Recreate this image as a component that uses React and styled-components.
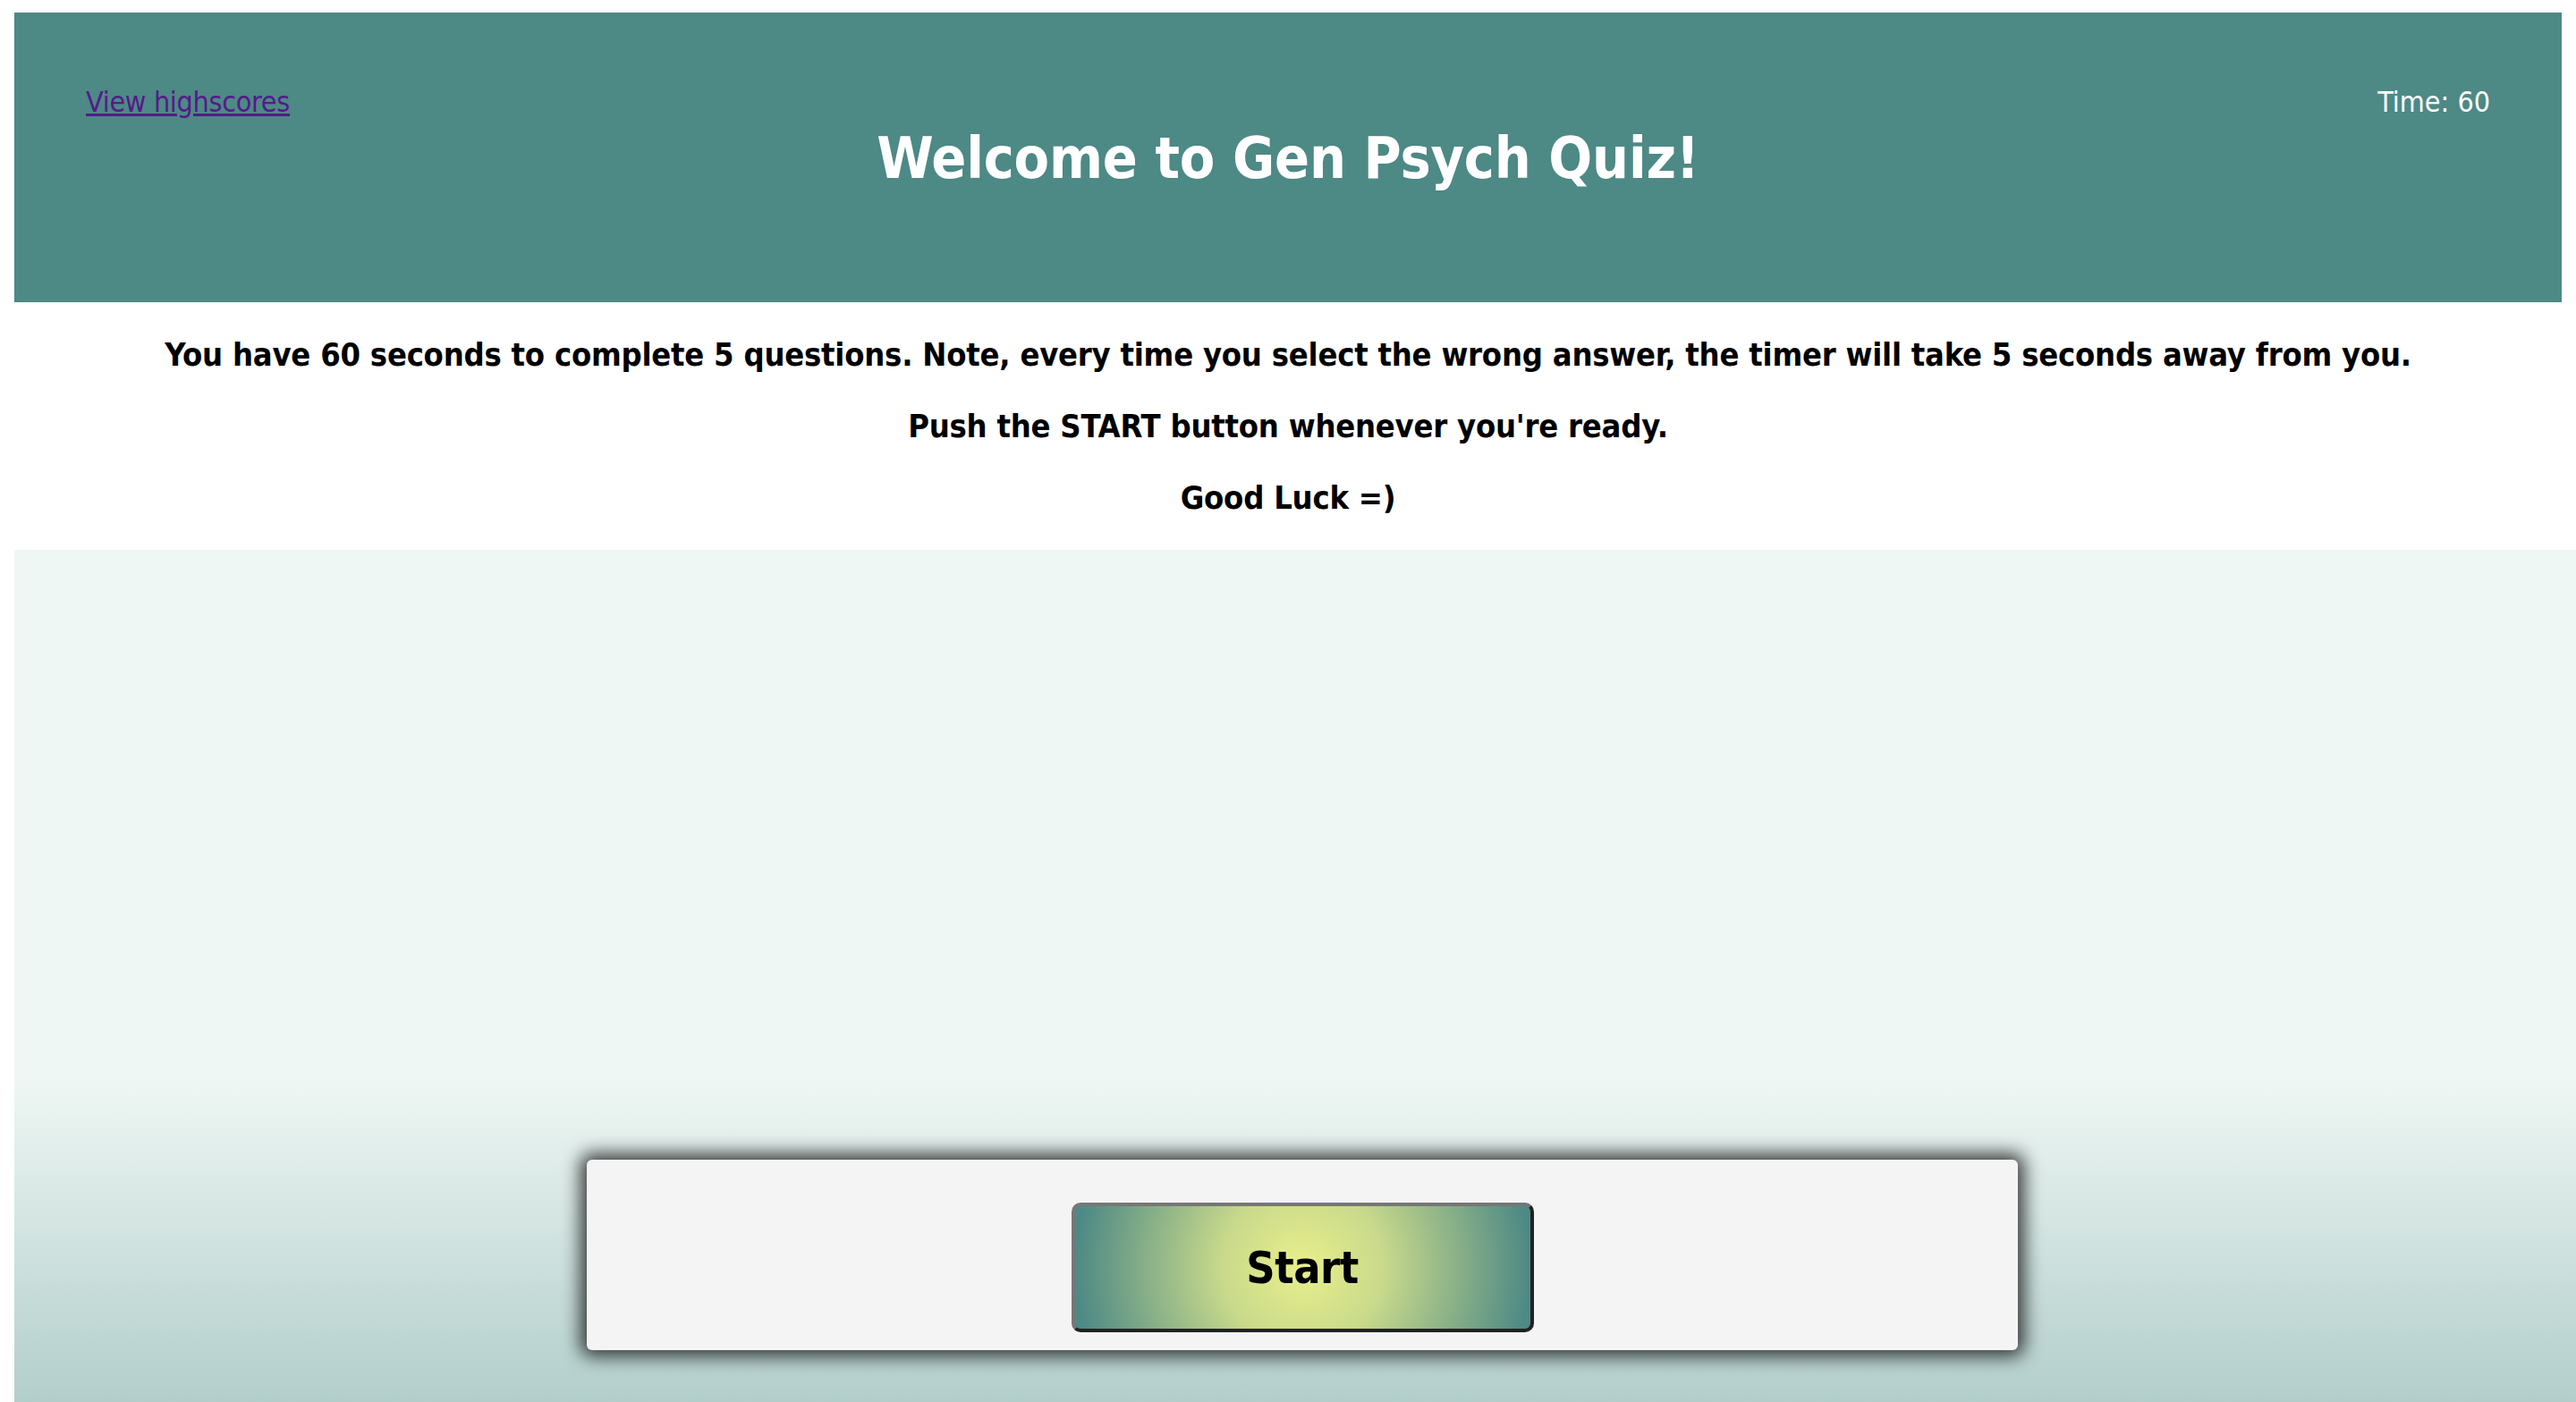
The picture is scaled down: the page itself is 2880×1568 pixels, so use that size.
import React from "react";
import styled, { createGlobalStyle } from "styled-components";

/* ---------------- GLOBAL ---------------- */

const GlobalStyle = createGlobalStyle`
  html, body {
    overflow: hidden;
  }

  body {
    margin: 14px 0 0 16px;
    background: #ffffff;
    font-family: "DejaVu Sans", Verdana, sans-serif;
    font-stretch: condensed;
    color: #000;
  }
`;

/* ---------------- HEADER ---------------- */

const Header = styled.header`
  box-sizing: border-box;
  height: 324px;
  margin-right: 16px;
  padding: 81px 80px 0;
  background: #4d8985;
`;

const TopRow = styled.div`
  display: flex;
  justify-content: space-between;
  align-items: flex-start;
  font-size: 32px;
`;

const ScoresLink = styled.a`
  color: #551a8b;
  letter-spacing: -0.3px;
  text-decoration: underline;
  cursor: pointer;
`;

const Timer = styled.span`
  color: #ffffff;
`;

const Title = styled.h1`
  margin: 7px 0 0;
  font-size: 64px;
  font-weight: 700;
  letter-spacing: -0.2px;
  color: #ffffff;
  text-align: center;
`;

/* ---------------- INSTRUCTIONS ---------------- */

const Instructions = styled.section`
  margin-right: 16px;
  padding-top: 1px;
  text-align: center;
`;

const Line = styled.p`
  margin: 36px 0;
  font-size: 36px;
  line-height: 44px;
  font-weight: 700;
  letter-spacing: -0.22px;
`;

/* ---------------- QUIZ AREA ---------------- */

const QuizArea = styled.main`
  box-sizing: border-box;
  width: 100vw;
  height: 955px;
  display: flex;
  flex-direction: column;
  justify-content: flex-end;
  align-items: center;
  padding-bottom: 60px;
  background: linear-gradient(
    to bottom,
    #eff7f4 0%,
    #eff7f4 62%,
    #b2cecb 100%
  );
`;

const Card = styled.div`
  box-sizing: border-box;
  width: 1600px;
  height: 213px;
  padding-top: 48px;
  display: flex;
  justify-content: center;
  align-items: flex-start;
  background: #f4f4f4;
  border-radius: 6px;
  box-shadow: 0 0 20px 7px rgba(0, 0, 0, 0.75);
`;

const StartButton = styled.button`
  box-sizing: border-box;
  width: 517px;
  height: 145px;
  border: 4px solid;
  border-color: #767676 #222222 #222222 #767676;
  border-radius: 10px;
  background: radial-gradient(circle farthest-side, #e9ef8b 0%, #c9da8b 35%, #4d8985 100%);
  font-family: inherit;
  font-stretch: condensed;
  font-size: 50px;
  font-weight: 700;
  letter-spacing: -0.5px;
  color: #000;
  cursor: pointer;
`;

/* ---------------- COMPONENT ---------------- */

const App = () => (
  <>
    <GlobalStyle />
    <Header>
      <TopRow>
        <ScoresLink href="#highscores">View highscores</ScoresLink>
        <Timer>Time: 60</Timer>
      </TopRow>
      <Title>Welcome to Gen Psych Quiz!</Title>
    </Header>

    <Instructions>
      <Line>
        You have 60 seconds to complete 5 questions. Note, every time you select the wrong answer, the timer will take 5 seconds away from you.
      </Line>
      <Line>Push the START button whenever you're ready.</Line>
      <Line>Good Luck =)</Line>
    </Instructions>

    <QuizArea>
      <Card>
        <StartButton>Start</StartButton>
      </Card>
    </QuizArea>
  </>
);

export default App;
